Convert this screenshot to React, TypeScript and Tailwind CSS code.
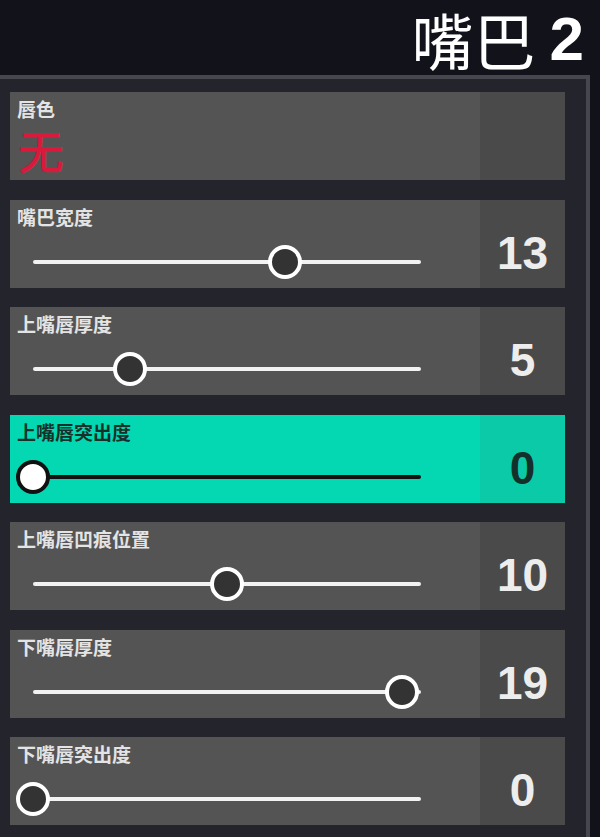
import React from 'react';

const CJK = "font-['Noto_Sans_CJK_SC','Noto_Sans',sans-serif]";

type SliderRow = { label: string; value: number; active?: boolean };

const ROWS: SliderRow[] = [
  { label: '嘴巴宽度', value: 13 },
  { label: '上嘴唇厚度', value: 5 },
  { label: '上嘴唇突出度', value: 0, active: true },
  { label: '上嘴唇凹痕位置', value: 10 },
  { label: '下嘴唇厚度', value: 19 },
  { label: '下嘴唇突出度', value: 0 },
];

const MAX = 20;
const TRACK_W = 388;

const Slider: React.FC<{ value: number; active?: boolean }> = ({ value, active }) => (
  <div className="relative h-[4px] w-[388px] ml-[23px]">
    <div className={`absolute inset-0 rounded-full ${active ? 'bg-[#111]' : 'bg-[#f2f2f2]'}`} />
    <div
      className={`absolute top-1/2 w-[34px] h-[34px] -translate-x-1/2 -translate-y-1/2 rounded-full border-[4px] ${
        active ? 'bg-white border-[#111]' : 'bg-[#333333] border-white'
      }`}
      style={{ left: (value / MAX) * TRACK_W }}
    />
  </div>
);

const Row: React.FC<SliderRow> = ({ label, value, active }) => (
  <div className="flex h-[88px]">
    <div className={`w-[470px] flex flex-col ${active ? 'bg-[#03d8b2]' : 'bg-[#545454]'}`}>
      <div className={`${CJK} pl-[7px] pt-[6px] text-[19px] leading-[22px] font-bold ${active ? 'text-[#18302a]' : 'text-[#e4e4e4]'}`}>
        {label}
      </div>
      <div className="pt-[32px]">
        <Slider value={value} active={active} />
      </div>
    </div>
    <div
      className={`w-[85px] flex items-center justify-center pt-[19px] font-['Liberation_Sans',sans-serif] font-bold text-[46px] ${
        active ? 'bg-[#0bcaa7] text-[#14302a]' : 'bg-[#4a4a4a] text-[#ededed]'
      }`}
    >
      {value}
    </div>
  </div>
);

export default function App() {
  return (
    <div className="w-[600px] h-[837px] bg-[#12131a] overflow-hidden flex flex-col">
      <div className="h-[75px] flex items-center justify-end pr-[16px] pt-[2px] text-white">
        <span className={`${CJK} text-[62px] leading-[70px] font-normal`}>嘴巴</span>
        <span className="font-['Liberation_Sans',sans-serif] text-[62px] leading-[70px] font-bold ml-[14px]">2</span>
      </div>
      <div className="flex-1 w-[590px] bg-[#24252c] border-t-[4px] border-r-[4px] border-[#45464e] pl-[10px] pt-[13px] flex flex-col gap-[19.5px]">
        <div className="flex h-[88px]">
          <div className="w-[470px] bg-[#545454] flex flex-col">
            <div className={`${CJK} pl-[7px] pt-[7px] text-[19px] leading-[19px] font-bold text-[#e4e4e4]`}>唇色</div>
            <div className={`${CJK} pl-[8px] text-[46px] leading-[62px] font-medium text-[#d81a3c]`}>无</div>
          </div>
          <div className="w-[85px] bg-[#4a4a4a]" />
        </div>
        {ROWS.map((r) => (
          <Row key={r.label} {...r} />
        ))}
      </div>
    </div>
  );
}
